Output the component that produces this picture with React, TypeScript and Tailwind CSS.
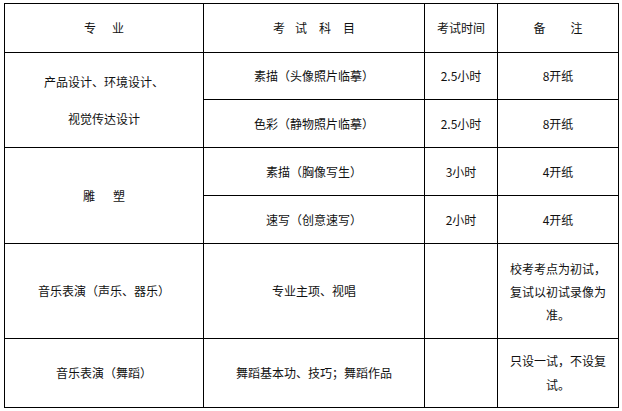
export default function App() {
  const cell = "bg-white flex items-center justify-center text-center";

  return (
    <div
      className="min-h-screen bg-white pl-[4px] pt-[3px] text-[12px] text-[#111]"
      style={{ fontFamily: '"Noto Sans CJK SC", "Noto Sans", sans-serif' }}
    >
      <div className="inline-grid grid-cols-[198px_220px_72px_120px] grid-rows-[48px_46px_47px_47px_47px_94px_68px] gap-px bg-black p-px">
        {/* header */}
        <div className={cell}>
          专<span className="inline-block w-[16px]" />业
        </div>
        <div className={cell}>
          考<span className="inline-block w-[10px]" />试
          <span className="inline-block w-[12px]" />科
          <span className="inline-block w-[12px]" />目
        </div>
        <div className={cell}>考试时间</div>
        <div className={cell}>
          备<span className="inline-block w-[25px]" />注
        </div>

        {/* design */}
        <div className={`${cell} row-span-2 flex-col leading-[37px]`}>
          <span>产品设计、环境设计、</span>
          <span>视觉传达设计</span>
        </div>
        <div className={cell}>素描（头像照片临摹）</div>
        <div className={cell}>2.5小时</div>
        <div className={cell}>8开纸</div>
        <div className={cell}>色彩（静物照片临摹）</div>
        <div className={cell}>2.5小时</div>
        <div className={cell}>8开纸</div>

        {/* sculpture */}
        <div className={`${cell} row-span-2`}>
          雕<span className="inline-block w-[18px]" />塑
        </div>
        <div className={cell}>素描（胸像写生）</div>
        <div className={cell}>3小时</div>
        <div className={cell}>4开纸</div>
        <div className={cell}>速写（创意速写）</div>
        <div className={cell}>2小时</div>
        <div className={cell}>4开纸</div>

        {/* music */}
        <div className={cell}>音乐表演（声乐、器乐）</div>
        <div className={cell}>专业主项、视唱</div>
        <div className={cell}></div>
        <div className={`${cell} px-[10px] leading-[23px]`}>
          校考考点为初试，复试以初试录像为准。
        </div>

        {/* dance */}
        <div className={cell}>音乐表演（舞蹈）</div>
        <div className={cell}>舞蹈基本功、技巧；舞蹈作品</div>
        <div className={cell}></div>
        <div className={`${cell} px-[10px] leading-[24px]`}>
          只设一试，不设复试。
        </div>
      </div>
    </div>
  );
}
